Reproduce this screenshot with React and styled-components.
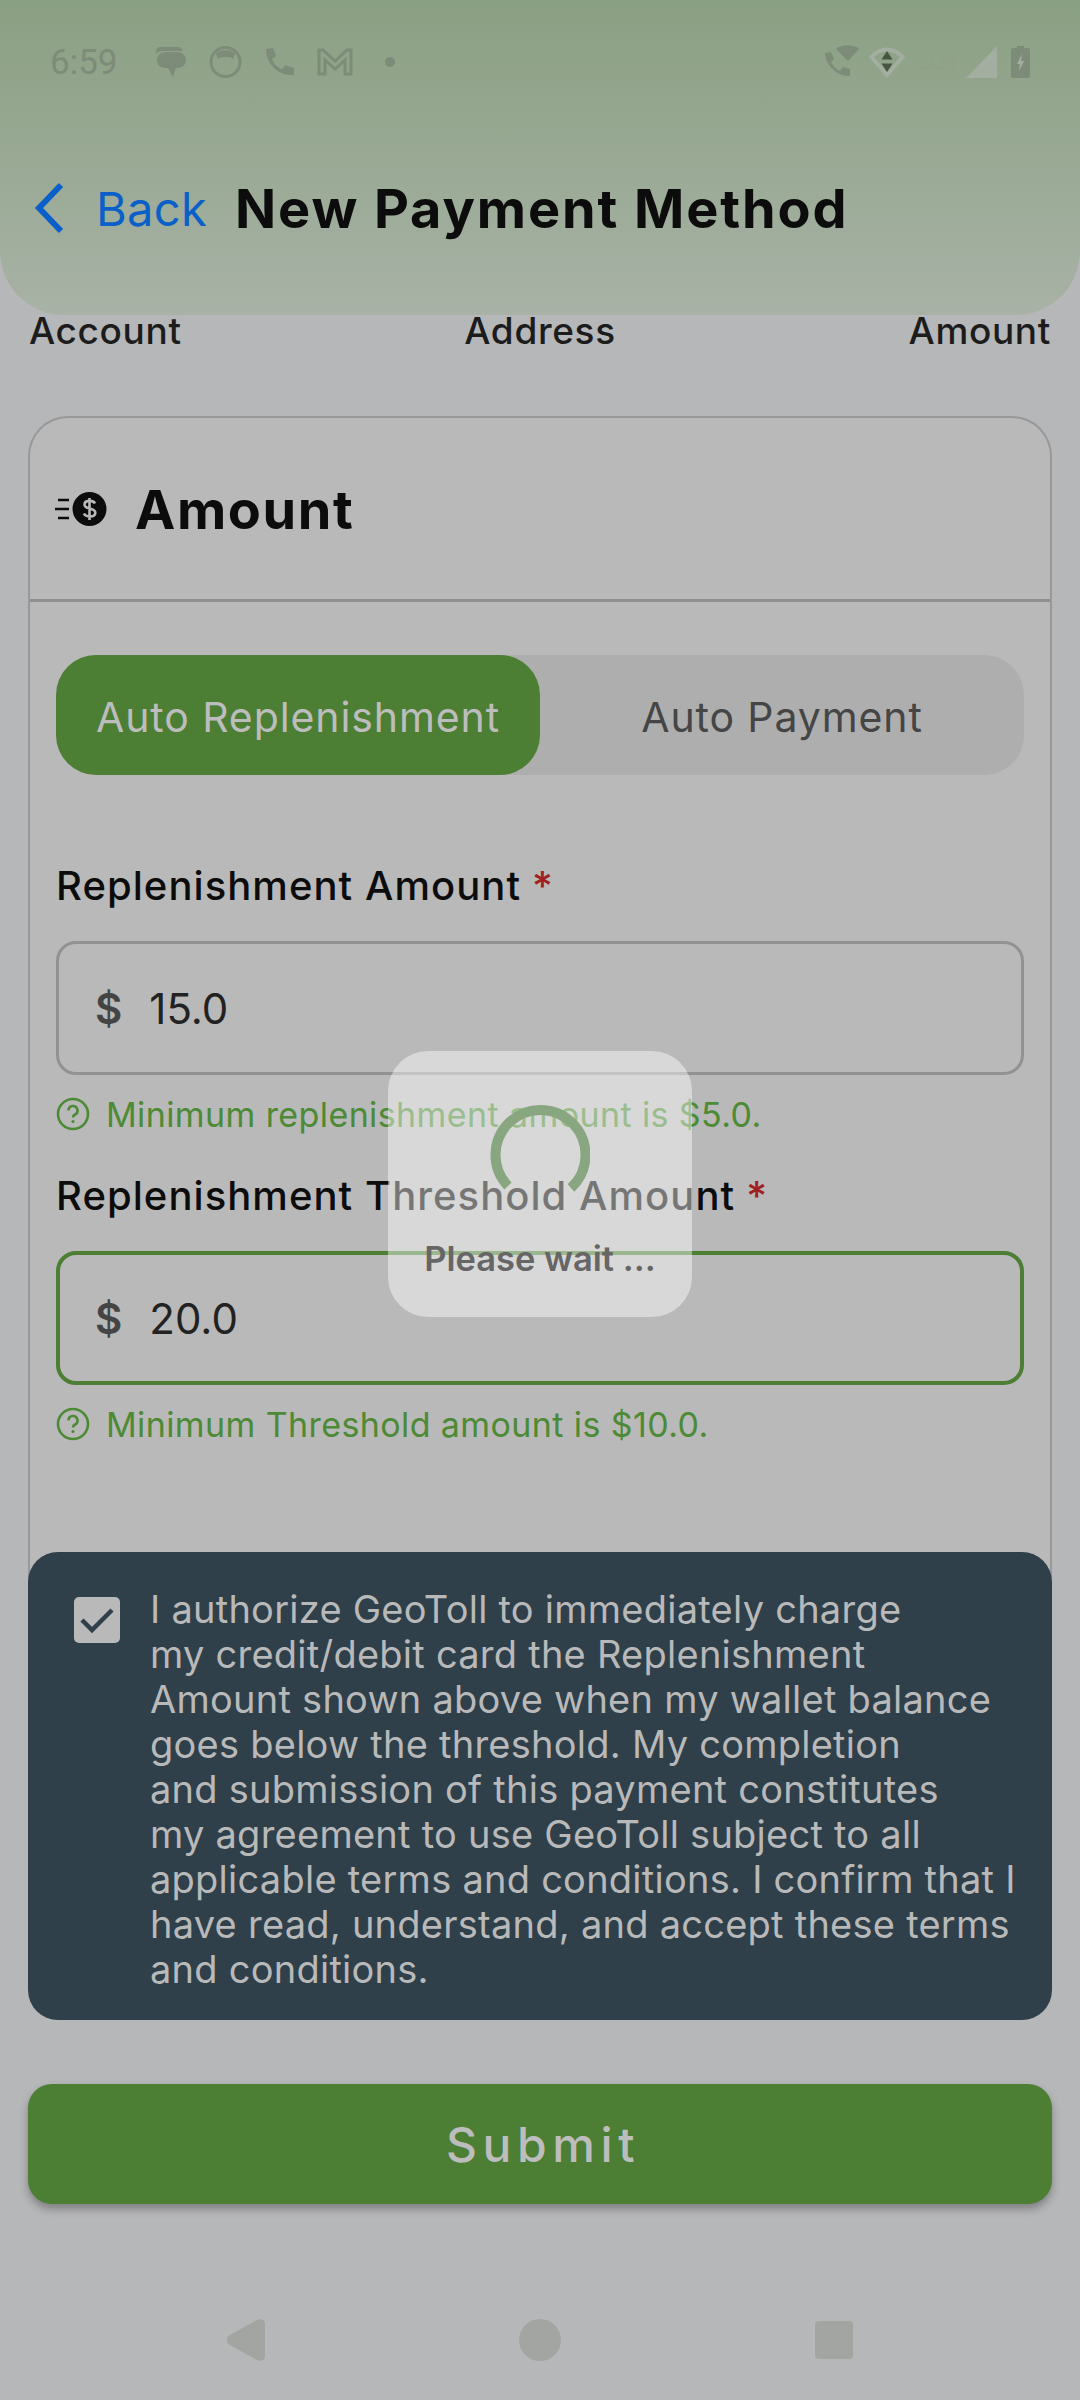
import styled, { createGlobalStyle } from 'styled-components';

const GlobalStyle = createGlobalStyle`
  html, body {
    margin: 0;
    padding: 0;
    background: #b6b7b9;
  }
  * {
    box-sizing: border-box;
  }
`;

const Page = styled.div`
  position: relative;
  width: 1080px;
  height: 2400px;
  overflow: hidden;
  background: #b6b7b9;
  color: #0c0c0c;
  font-family: Inter, "Liberation Sans", sans-serif;
`;

const Header = styled.header`
  height: 315px;
  background: linear-gradient(180deg, #8aa082 0%, #a8b2a6 100%);
  border-radius: 0 0 64px 64px;
`;

const StatusBar = styled.div`
  display: flex;
  justify-content: space-between;
  align-items: center;
  height: 124px;
  padding: 0 50px;
`;

const StatusGroup = styled.div`
  display: flex;
  align-items: center;
`;

const Time = styled.span`
  margin-right: 37px;
  font-family: Roboto, sans-serif;
  font-size: 35px;
  color: #7d8c78;
`;

const FiveG = styled.span`
  margin-left: 12px;
  font-family: Roboto, sans-serif;
  font-size: 24px;
  color: #8fa288;
`;

const Glyph = styled.svg`
  display: block;
  margin-left: ${(p) => p.$gap || 0}px;
  fill: #7d8c78;
`;

const NavRow = styled.div`
  display: flex;
  align-items: center;
  height: 72px;
  margin-top: 48px;
  padding-left: 32px;
`;

const BackLink = styled.a`
  margin-left: 30px;
  font-size: 47px;
  letter-spacing: 0.3px;
  color: #0a60c8;
`;

const Title = styled.h1`
  margin: 0 0 0 28px;
  font-size: 54px;
  font-weight: 700;
  letter-spacing: 1.9px;
`;

const Steps = styled.div`
  display: grid;
  grid-template-columns: 1fr auto 1fr;
  height: 34px;
  margin-top: -2px;
  padding: 0 29px;
  font-size: 37px;
  font-weight: 500;
  letter-spacing: 0.65px;
  line-height: 36px;
  color: #1c1c1c;
`;

const LastStep = styled.span`
  justify-self: end;
`;

const Card = styled.section`
  height: 1166px;
  margin: 69px 28px 0;
  background: #b9b9b9;
  border: 2px solid #989898;
  border-bottom: none;
  border-radius: 40px 40px 0 0;
`;

const CardHead = styled.div`
  display: flex;
  align-items: center;
  height: 184px;
  padding: 0 25px;
  border-bottom: 3px solid #8f8f8f;
`;

const CardTitle = styled.h2`
  margin: 2px 0 0 28px;
  font-size: 54px;
  font-weight: 700;
  letter-spacing: 1.6px;
`;

const CardBody = styled.div`
  padding: 53px 26px 0;
`;

const Toggle = styled.div`
  display: grid;
  grid-template-columns: 1fr 1fr;
  height: 120px;
  background: #aeaeae;
  border-radius: 40px;
`;

const ToggleOption = styled.div`
  display: flex;
  align-items: center;
  justify-content: center;
  padding-top: 4px;
  font-size: 41px;
  letter-spacing: 0.9px;
  color: ${(p) => (p.$active ? '#bdbdbd' : '#454545')};
  background: ${(p) => (p.$active ? '#4c7f34' : 'transparent')};
  border-radius: 40px;
`;

const Field = styled.div`
  margin-top: ${(p) => p.$top}px;
`;

const Label = styled.div`
  height: 48px;
  font-size: 40px;
  font-weight: 500;
  letter-spacing: 1.05px;
  line-height: 48px;
`;

const Star = styled.span`
  margin-left: 11px;
  color: #a02020;
`;

const InputBox = styled.div`
  display: flex;
  align-items: center;
  gap: 27px;
  height: 134px;
  margin-top: 31px;
  padding: 0 ${(p) => (p.$focused ? 35 : 36)}px;
  font-size: 42px;
  color: #222;
  border: ${(p) => (p.$focused ? '4px solid #4c7f34' : '3px solid #929292')};
  border-radius: 20px;
`;

const Currency = styled.span`
  font-weight: 600;
  font-size: 42px;
  color: #444;
`;

const Help = styled.div`
  display: flex;
  align-items: center;
  gap: 16px;
  height: 40px;
  margin-top: 19px;
  font-size: 34px;
  letter-spacing: 0.4px;
  color: #4c8a35;
`;

const Consent = styled.div`
  display: flex;
  align-items: flex-start;
  height: 468px;
  margin: -30px 28px 0;
  padding: 35px 0 0 46px;
  position: relative;
  background: #2f404a;
  border-radius: 30px;
`;

const Check = styled.div`
  flex: none;
  display: flex;
  align-items: center;
  justify-content: center;
  width: 46px;
  height: 46px;
  margin-top: 10px;
  background: #b9b9b9;
  border-radius: 5px;
`;

const ConsentText = styled.div`
  margin-left: 30px;
  font-size: 38px;
  letter-spacing: 0.25px;
  line-height: 45px;
  color: #b9b9b9;
  white-space: pre-line;
`;

const Submit = styled.button`
  display: block;
  width: 1024px;
  height: 120px;
  margin: 64px 28px 0;
  padding: 0 0 0 6px;
  font-family: inherit;
  font-size: 48px;
  font-weight: 500;
  letter-spacing: 5.6px;
  color: #bdbdbd;
  background: #4c7f34;
  border: none;
  border-radius: 24px;
  box-shadow: 0 5px 9px rgba(0, 0, 0, 0.3);
`;

const NavBar = styled.nav`
  display: flex;
  justify-content: space-between;
  align-items: center;
  height: 42px;
  margin-top: 115px;
  padding: 0 227px;
`;

const NavGlyph = styled.svg`
  display: block;
  fill: #a3a5a3;
`;

const Overlay = styled.div`
  position: absolute;
  inset: 0;
  display: flex;
  align-items: center;
  justify-content: center;
  padding-bottom: 32px;
`;

const Toast = styled.div`
  display: flex;
  flex-direction: column;
  align-items: center;
  width: 304px;
  height: 266px;
  padding-top: 51px;
  background: rgba(255, 255, 255, 0.44);
  border-radius: 40px;
`;

const ToastText = styled.div`
  margin-top: 36px;
  font-size: 34.5px;
  font-weight: 600;
  color: #666;
`;

const consentCopy = `I authorize GeoToll to immediately charge
my credit/debit card the Replenishment
Amount shown above when my wallet balance
goes below the threshold. My completion
and submission of this payment constitutes
my agreement to use GeoToll subject to all
applicable terms and conditions. I confirm that I
have read, understand, and accept these terms
and conditions.`;

function HelpIcon() {
  return (
    <svg width="34" height="34" viewBox="0 0 34 34" fill="none" stroke="#4c8a35">
      <circle cx="17" cy="17" r="15" strokeWidth="2.6" />
      <path d="M12.5 13.5a4.5 4.5 0 1 1 6.6 4c-1.5.8-2.1 1.5-2.1 3" strokeWidth="2.6" />
      <circle cx="17" cy="24.5" r="1.6" fill="#4c8a35" stroke="none" />
    </svg>
  );
}

function FormField({ top, label, value, hint, focused }) {
  return (
    <Field $top={top}>
      <Label>
        {label}
        <Star>*</Star>
      </Label>
      <InputBox $focused={focused}>
        <Currency>$</Currency>
        <span>{value}</span>
      </InputBox>
      <Help>
        <HelpIcon />
        <span>{hint}</span>
      </Help>
    </Field>
  );
}

export default function App() {
  return (
    <Page>
      <GlobalStyle />
      <Header>
        <StatusBar>
          <StatusGroup>
            <Time>6:59</Time>
            <Glyph width="31" height="32" viewBox="0 0 31 32">
              <path d="M5 1h17c3 0 5 1 6 4H8C5 5 2 6 1 8c0-4 1-7 4-7z" />
              <path d="M11 6h11c5 0 9 3 9 8s-4 8-9 8h-1l-3 9-5-9h-2C6 22 2 19 2 14s4-8 9-8z" />
            </Glyph>
            <Glyph $gap="23" width="33" height="32" viewBox="0 0 33 32">
              <circle cx="16.5" cy="16" r="14.5" fill="none" stroke="#7d8c78" strokeWidth="3" />
              <path d="M7 8c3-5 16-5 19 0l-2 5c-3-3-12-3-15 0z" />
            </Glyph>
            <Glyph $gap="23" width="30" height="30" viewBox="0 0 30 30">
              <path d="M1 2l7-1 3 8-4 3c2 5 5 8 10 10l3-4 9 3v7c-16 1-28-11-28-26z" />
            </Glyph>
            <Glyph $gap="22" width="36" height="28" viewBox="0 0 36 28">
              <path
                d="M2 26V2h4l12 11L30 2h4v24h-6V12L18 21 8 12v14z"
                fill="none"
                stroke="#7d8c78"
                strokeWidth="3"
              />
            </Glyph>
            <Glyph $gap="32" width="10" height="10" viewBox="0 0 10 10">
              <circle cx="5" cy="5" r="5" />
            </Glyph>
          </StatusGroup>
          <StatusGroup>
            <Glyph width="34" height="34" viewBox="0 0 34 34">
              <path d="M0 8l6-1 3 7-3 3c2 4 5 7 9 9l3-4 7 2v7C13 32 0 20 0 8z" />
              <path d="M11 4c6-5 17-5 23 0L23 16z" />
            </Glyph>
            <Glyph $gap="10" width="36" height="32" viewBox="0 0 36 32">
              <path d="M18 29L2.5 11c9-10 22-10 31 0z" fill="none" stroke="#a3ada0" strokeWidth="4" />
              <path d="M18 5l5.5 8.5h-11z" fill="#48543f" />
              <path d="M18 26l-5.5-8.5h11z" fill="#48543f" />
            </Glyph>
            <FiveG>5G+</FiveG>
            <Glyph $gap="6" width="31" height="32" viewBox="0 0 31 32">
              <path d="M31 0v32H0z" fill="#a3ada0" />
            </Glyph>
            <Glyph $gap="14" width="19" height="32" viewBox="0 0 19 32">
              <path d="M6 0h7v2h4c1 0 2 1 2 2v26c0 1-1 2-2 2H2c-1 0-2-1-2-2V4c0-1 1-2 2-2h4z" />
              <path d="M11 8l-5 10h3l-1 7 5-10h-3z" fill="#a3ada0" />
            </Glyph>
          </StatusGroup>
        </StatusBar>
        <NavRow>
          <svg width="34" height="52" viewBox="0 0 34 52" fill="none" stroke="#0a60c8" strokeWidth="6">
            <path d="M29 3L7 26l22 23" />
          </svg>
          <BackLink>Back</BackLink>
          <Title>New Payment Method</Title>
        </NavRow>
      </Header>

      <Steps>
        <span>Account</span>
        <span>Address</span>
        <LastStep>Amount</LastStep>
      </Steps>

      <Card>
        <CardHead>
          <svg width="52" height="36" viewBox="0 0 52 36">
            <path d="M3 9h11M0 18h14M3 27h11" stroke="#0c0c0c" strokeWidth="2.6" />
            <circle cx="34.5" cy="18" r="17" fill="#0c0c0c" />
            <path
              d="M40 12.5c-1-2-3-2.6-5.5-2.6-3 0-5 1.4-5 3.8 0 5 10.8 2.6 10.8 8 0 2.5-2.4 3.8-5.4 3.8-2.8 0-5-1-6-3M34.5 7v22"
              fill="none"
              stroke="#b9b9b9"
              strokeWidth="2.6"
            />
          </svg>
          <CardTitle>Amount</CardTitle>
        </CardHead>
        <CardBody>
          <Toggle>
            <ToggleOption $active>Auto Replenishment</ToggleOption>
            <ToggleOption>Auto Payment</ToggleOption>
          </Toggle>
          <FormField
            top={87}
            label="Replenishment Amount"
            value="15.0"
            hint="Minimum replenishment amount is $5.0."
          />
          <FormField
            top={38}
            label="Replenishment Threshold Amount"
            value="20.0"
            hint="Minimum Threshold amount is $10.0."
            focused
          />
        </CardBody>
      </Card>

      <Consent>
        <Check>
          <svg width="36" height="28" viewBox="0 0 36 28" fill="none" stroke="#2f404a" strokeWidth="4.5">
            <path d="M3 14l10 10L33 4" />
          </svg>
        </Check>
        <ConsentText>{consentCopy}</ConsentText>
      </Consent>

      <Submit>Submit</Submit>

      <NavBar>
        <NavGlyph width="38" height="42" viewBox="0 0 38 42">
          <path d="M1 17L30 1c4-2 8 0 8 3v34c0 3-4 5-8 3L1 25c-1-2-1-6 0-8z" />
        </NavGlyph>
        <NavGlyph width="42" height="42" viewBox="0 0 42 42">
          <circle cx="21" cy="21" r="21" />
        </NavGlyph>
        <NavGlyph width="38" height="38" viewBox="0 0 38 38">
          <rect width="38" height="38" rx="4" />
        </NavGlyph>
      </NavBar>

      <Overlay>
        <Toast>
          <svg width="100" height="100" viewBox="0 0 100 100" fill="none">
            <path d="M18 84a45 45 0 1 1 63 2" stroke="#88a680" strokeWidth="10" />
          </svg>
          <ToastText>Please wait ...</ToastText>
        </Toast>
      </Overlay>
    </Page>
  );
}
